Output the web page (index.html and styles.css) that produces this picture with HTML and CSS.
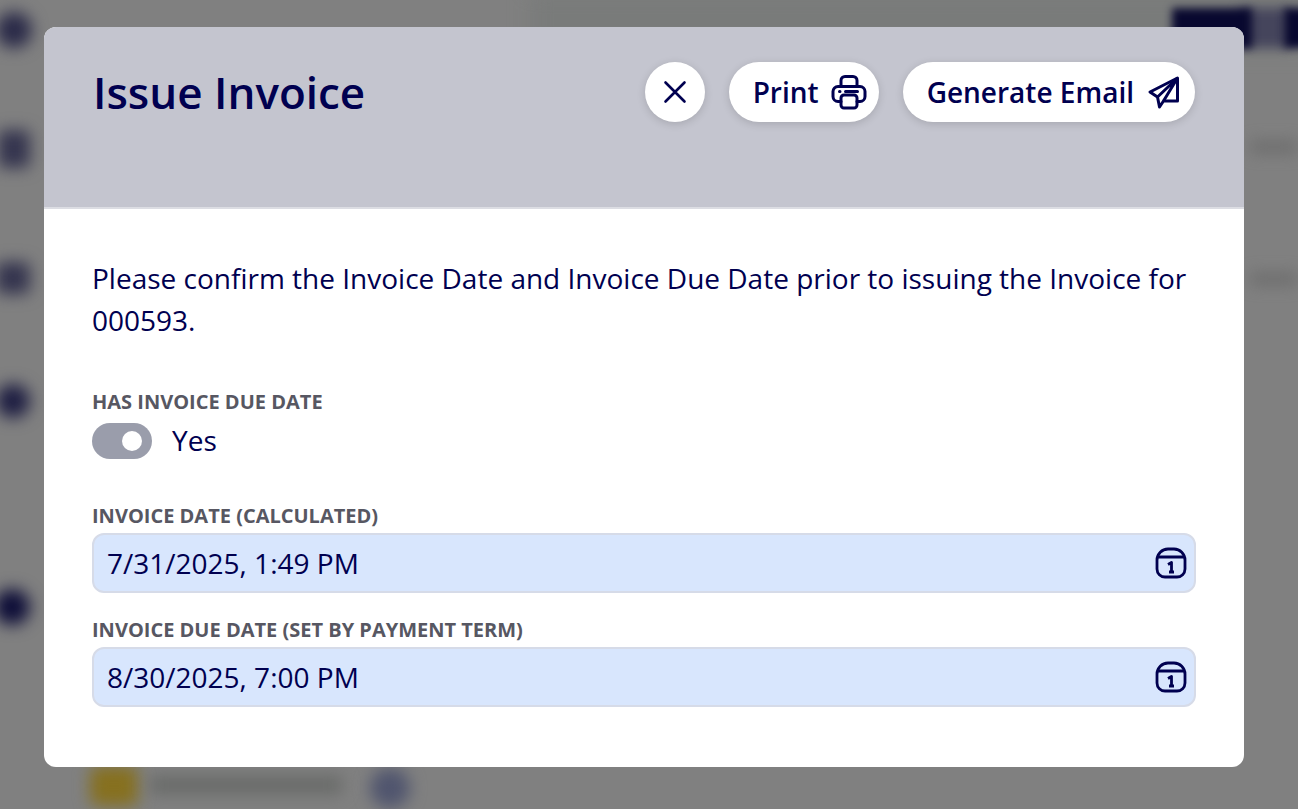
FILE: index.html
```html
<!DOCTYPE html>
<html lang="en">
<head>
  <meta charset="UTF-8" />
  <title>Issue Invoice</title>
  <link rel="stylesheet" href="styles.css">
</head>
<body>

<!-- blurred page behind the dialog -->
<div class="backdrop">
  <span class="blob blob-band"></span>
  <span class="blob blob-avatar"></span>
  <span class="blob blob-nav1"></span>
  <span class="blob blob-nav2"></span>
  <span class="blob blob-nav3"></span>
  <span class="blob blob-nav4"></span>
  <span class="blob blob-top-gap"></span>
  <span class="blob blob-top"></span>
  <span class="blob blob-top2"></span>
  <span class="blob blob-status"></span>
  <span class="blob blob-status-text"></span>
  <span class="blob blob-info"></span>
  <span class="blob blob-line1"></span>
  <span class="blob blob-line2"></span>
</div>

<div class="overlay">
  <div class="modal">
    <header class="modal-header">
      <h1>Issue Invoice</h1>
      <div class="actions">
        <button class="btn btn-round" type="button" aria-label="Close">
          <svg width="26" height="26" viewBox="0 0 26 26" fill="none" stroke="currentColor" stroke-width="2.6" stroke-linecap="round"><path d="M3.500 3.500 22.500 22.500M22.500 3.500 3.500 22.500"/></svg>
        </button>
        <button class="btn" type="button">Print
          <svg width="36" height="36" viewBox="0 0 36 36" fill="none" stroke="currentColor" stroke-width="3" stroke-linejoin="round" stroke-linecap="round"><path d="M10 12.500V6.500a4 4 0 0 1 4-4h8a4 4 0 0 1 4 4v6"/><path d="M10 27.500H7a5 5 0 0 1-5-5v-5a5 5 0 0 1 5-5h22a5 5 0 0 1 5 5v5a5 5 0 0 1-5 5h-3"/><rect x="10" y="21" width="16" height="13" rx="3"/><path d="M8.500 17.500h.5M14.500 17.500h12"/></svg>
        </button>
        <button class="btn btn-email" type="button">Generate Email
          <svg width="36" height="36" viewBox="0 0 36 36" fill="none" stroke="currentColor" stroke-width="3" stroke-linejoin="round"><path d="M30.500 4 3 18l7.500 5 2 10 4-6h14z"/><path d="M30.500 4 10.500 23M30.500 4 16.500 27"/></svg>
        </button>
      </div>
    </header>

    <div class="modal-body">
      <p class="intro">Please confirm the Invoice Date and Invoice Due Date prior to issuing the Invoice for 000593.</p>

      <div class="field field-toggle">
        <label class="field-label">Has Invoice Due Date</label>
        <div class="toggle-row">
          <span class="toggle"><span class="toggle-knob"></span></span>
          <span class="toggle-text">Yes</span>
        </div>
      </div>

      <div class="field">
        <label class="field-label">Invoice Date (Calculated)</label>
        <div class="date-input">
          <span>7/31/2025, 1:49 PM</span>
          <svg class="cal" width="32" height="32" viewBox="0 0 32 32" fill="none" stroke="currentColor" stroke-width="2.800"><path d="M13 2h6a11 11 0 0 1 11 11v9a8 8 0 0 1-8 8H10a8 8 0 0 1-8-8v-9A11 11 0 0 1 13 2z"/><path d="M3.500 10h25"/><path d="M13 17.500 16.500 15.500V25M14 25h5" stroke-linejoin="round"/></svg>
        </div>
      </div>

      <div class="field">
        <label class="field-label">Invoice Due Date (Set by Payment Term)</label>
        <div class="date-input">
          <span>8/30/2025, 7:00 PM</span>
          <svg class="cal" width="32" height="32" viewBox="0 0 32 32" fill="none" stroke="currentColor" stroke-width="2.800"><path d="M13 2h6a11 11 0 0 1 11 11v9a8 8 0 0 1-8 8H10a8 8 0 0 1-8-8v-9A11 11 0 0 1 13 2z"/><path d="M3.500 10h25"/><path d="M13 17.500 16.500 15.500V25M14 25h5" stroke-linejoin="round"/></svg>
        </div>
      </div>
    </div>
  </div>
</div>

</body>
</html>
```

FILE: styles.css
```css
html, body {
  height: 100%;
}
body {
  font-family: "Open Sans", Arial, sans-serif;
  margin: 0;
  background-color: #808080;
  color: #000050;
  overflow: hidden;
}
.backdrop {
  position: absolute;
  top: 0;
  left: 0;
  right: 0;
  bottom: 0;
  overflow: hidden;
}
.blob {
  position: absolute;
  display: block;
  filter: blur(8px);
}
.blob-band {
  left: 530px;
  top: -10px;
  width: 800px;
  height: 60px;
  background: #797b7a;
  filter: blur(10px);
}
.blob-avatar {
  left: -4px;
  top: 12px;
  width: 36px;
  height: 36px;
  border-radius: 50%;
  background: #2a2a48;
}
.blob-nav1 {
  left: -2px;
  top: 130px;
  width: 32px;
  height: 38px;
  border-radius: 6px;
  background: #34344e;
}
.blob-nav2 {
  left: -4px;
  top: 262px;
  width: 34px;
  height: 32px;
  border-radius: 6px;
  background: #34344e;
}
.blob-nav3 {
  left: -4px;
  top: 384px;
  width: 34px;
  height: 34px;
  border-radius: 50%;
  background: #1e1e42;
}
.blob-nav4 {
  left: -6px;
  top: 589px;
  width: 36px;
  height: 36px;
  border-radius: 50%;
  background: #0e0e38;
}
.blob-top-gap {
  left: 1240px;
  top: 8px;
  width: 50px;
  height: 40px;
  background: #45455c;
  filter: blur(6px);
}
.blob-top {
  left: 1172px;
  top: 8px;
  width: 80px;
  height: 40px;
  background: #08082f;
  filter: blur(4px);
}
.blob-top2 {
  left: 1284px;
  top: 8px;
  width: 30px;
  height: 40px;
  background: #08082f;
  filter: blur(4px);
}
.blob-status {
  left: 90px;
  top: 766px;
  width: 48px;
  height: 40px;
  border-radius: 8px;
  background: #86701f;
}
.blob-status-text {
  left: 150px;
  top: 776px;
  width: 192px;
  height: 18px;
  background: #686a68;
}
.blob-info {
  left: 370px;
  top: 768px;
  width: 40px;
  height: 40px;
  border-radius: 50%;
  background: #50556e;
}
.blob-line1 {
  left: 1250px;
  top: 142px;
  width: 48px;
  height: 10px;
  background: #686868;
}
.blob-line2 {
  left: 1250px;
  top: 274px;
  width: 48px;
  height: 10px;
  background: #686868;
}
.overlay {
  position: absolute;
  top: 0;
  left: 0;
  right: 0;
  bottom: 0;
  padding: 27px 0 0 44px;
}
.modal {
  width: 1200px;
  height: 740px;
  background-color: white;
  border-radius: 12px;
  overflow: hidden;
}
.modal-header {
  display: flex;
  justify-content: space-between;
  align-items: flex-start;
  box-sizing: border-box;
  height: 182px;
  padding: 35px 49px 0 49px;
  background-color: #c4c5cf;
  border-bottom: 2px solid #dcdde3;
}
.modal-header h1 {
  margin: 0;
  font-size: 44px;
  font-weight: 600;
  line-height: 60px;
}
.actions {
  display: flex;
  gap: 24px;
}
.btn {
  display: flex;
  align-items: center;
  gap: 12px;
  height: 60px;
  padding: 0 12px 0 24px;
  border: none;
  border-radius: 30px;
  background-color: white;
  color: #000050;
  font-family: inherit;
  font-size: 28px;
  font-weight: 600;
  box-shadow: 0 2px 8px rgba(0,0,0,0.15);
}
.btn-email {
  gap: 13px;
}
.btn-round {
  width: 60px;
  padding: 0;
  justify-content: center;
}
.modal-body {
  padding: 48px 48px 0 48px;
}
.intro {
  margin: 0 0 48px;
  font-size: 28px;
  line-height: 42px;
}
.field {
  margin-bottom: 24px;
}
.field-toggle {
  margin-bottom: 44px;
}
.field-label {
  display: block;
  font-size: 20px;
  font-weight: 700;
  line-height: 26px;
  text-transform: uppercase;
  color: #575762;
  margin-bottom: 4px;
}
.field-toggle .field-label {
  margin-bottom: 8px;
}
.toggle-row {
  display: flex;
  align-items: center;
  gap: 20px;
  height: 36px;
  font-size: 28px;
}
.toggle {
  display: block;
  position: relative;
  width: 60px;
  height: 36px;
  border-radius: 18px;
  background-color: #9a9dab;
}
.toggle-knob {
  position: absolute;
  top: 8px;
  right: 10px;
  width: 20px;
  height: 20px;
  border-radius: 50%;
  background-color: white;
}
.toggle-text {
  padding-bottom: 2px;
}
.date-input {
  display: flex;
  justify-content: space-between;
  align-items: center;
  box-sizing: border-box;
  height: 60px;
  padding: 0 7px 0 13px;
  background-color: #d8e6fd;
  border: 2px solid #d6dbe8;
  border-radius: 12px;
  font-size: 28px;
}
```
